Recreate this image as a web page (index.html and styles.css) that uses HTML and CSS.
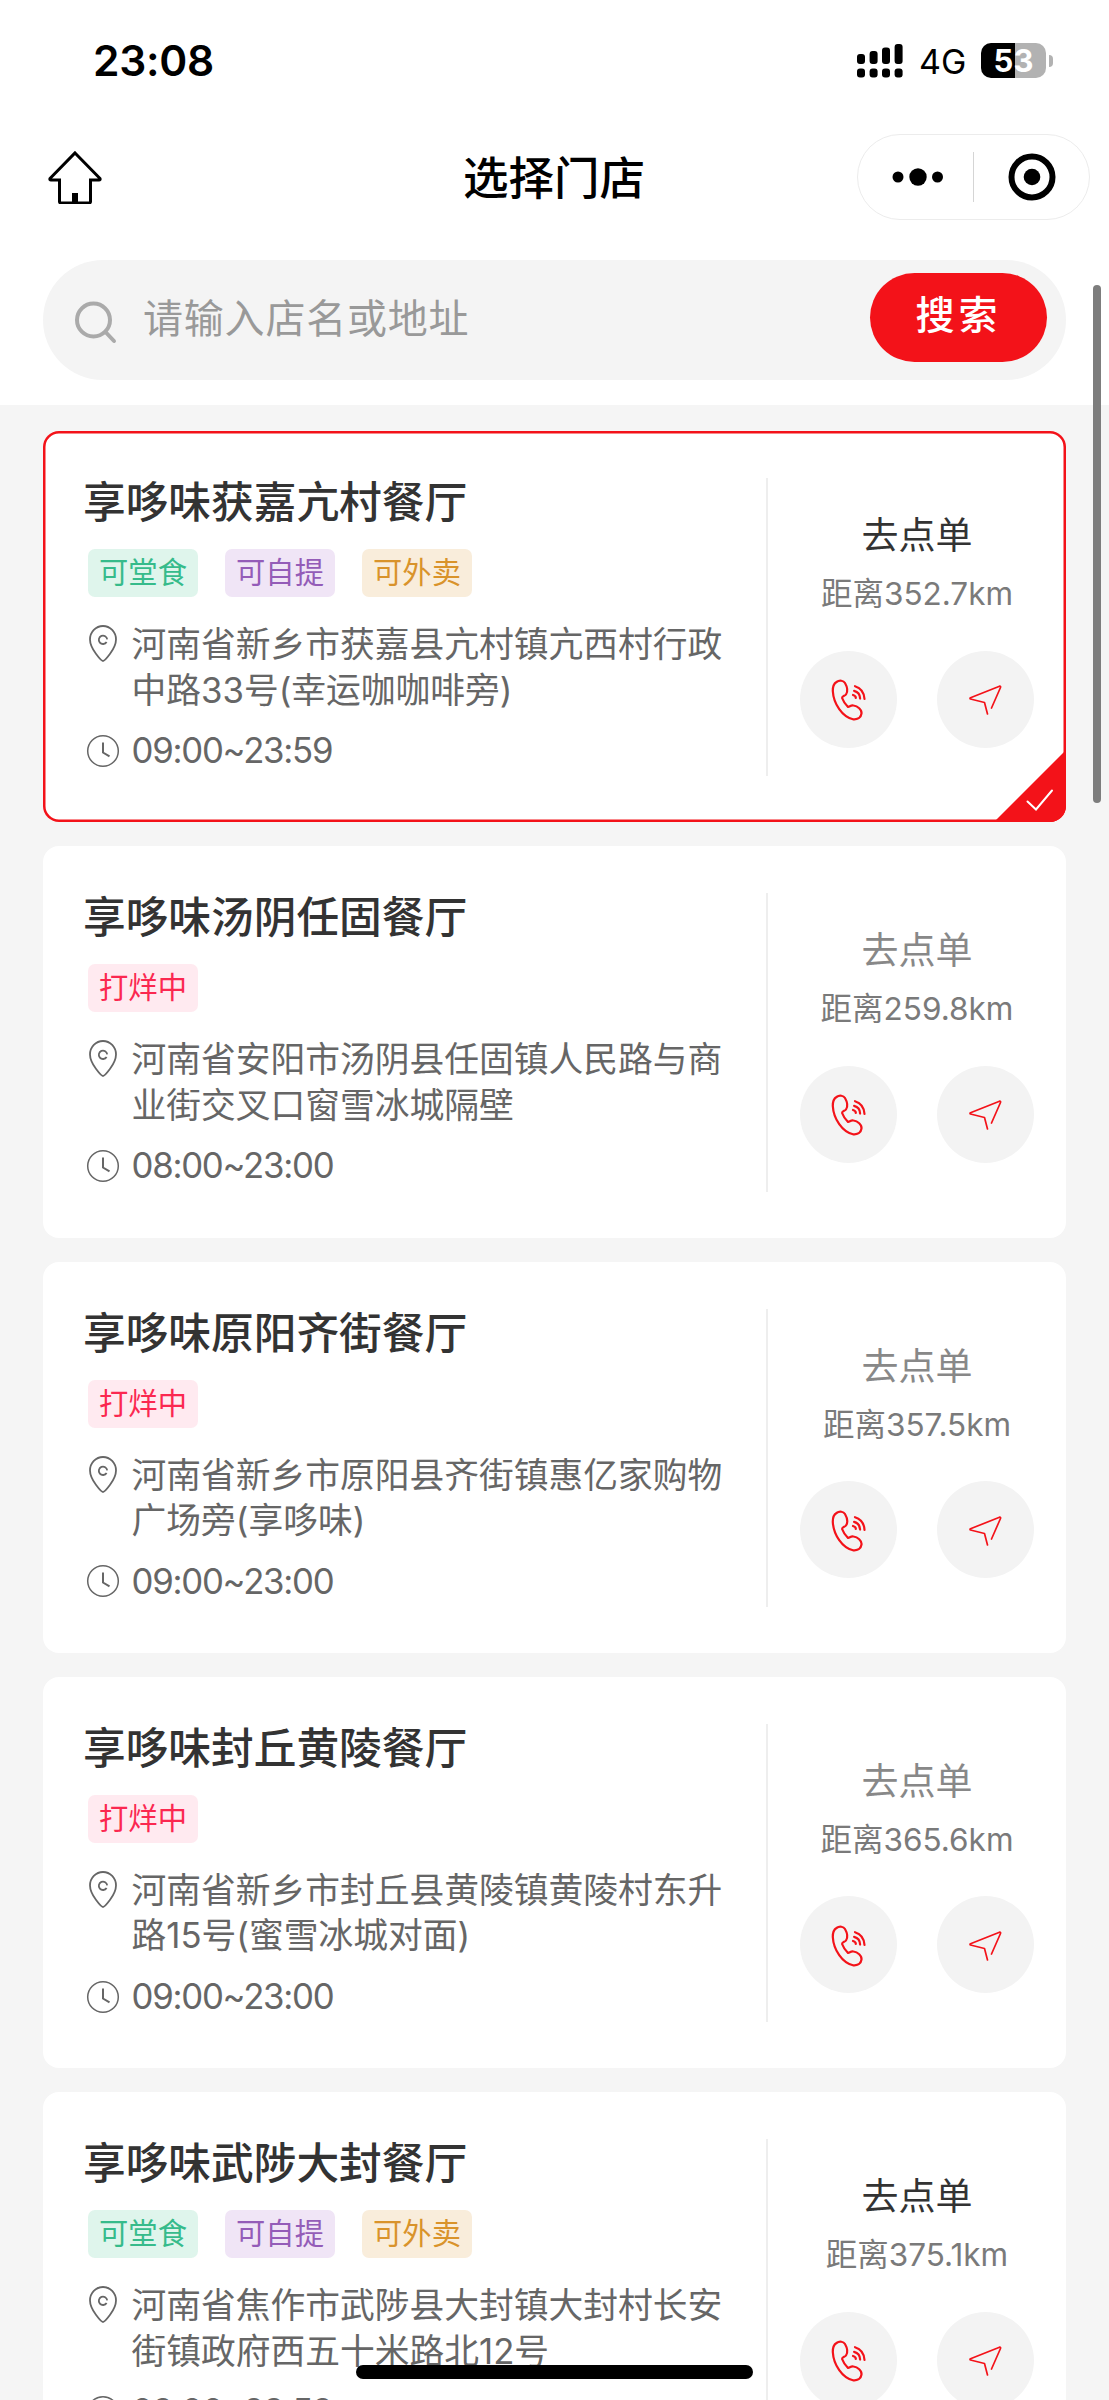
FILE: index.html
```html
<!DOCTYPE html>
<html lang="zh-CN">
<head>
<meta charset="utf-8">
<title>选择门店</title>
<link rel="stylesheet" href="styles.css">
</head>
<body>
<svg class="defs" width="0" height="0" aria-hidden="true">
  <symbol id="pin" viewBox="0 0 32 40"><path d="M16 37C14.500 37 3 25 3 15.500a13 13.500 0 0 1 26 0C29 25 17.500 37 16 37Z"/><path d="M19.600 18A4.200 4.200 0 1 1 20.200 15.400"/></symbol>
  <symbol id="clock" viewBox="0 0 34 34"><circle cx="17" cy="17" r="15.300"/><path d="M17 8.500V18.500L23.500 22.300" stroke-width="2"/></symbol>
  <symbol id="phone" viewBox="-1.500 -1 60 60"><path d="M16 12C19 9.800 23 10.500 24.500 13C26.500 16.500 27.500 21.500 25.500 24.500C24.500 26 21.500 26 21.600 28C23 32 25.500 35 27.500 37C29.500 36.500 30.500 35 33 35.500C37 36 41.500 39.500 41 43.500C40.500 47.500 37 49.800 32.500 49.300C22 47 13 34 12.300 21C12.200 17 13.500 13.500 16 12Z"/><path d="M34.500 16.200Q43.500 19 44 29M33.600 20.900Q39.500 22.500 39.600 28.600M32.500 25Q35.500 26 35.300 28"/></symbol>
  <symbol id="nav" viewBox="0 -1 60 60"><path d="M31.500 44L28.500 32.500L14.500 29Q13.500 28.400 14.500 27.800L43.500 16.200Q45 16 44.500 17.500L35.500 38"/></symbol>
</svg>
<div class="screen">
  <header class="top">
    <div class="status">
      <span class="time">23:08</span>
      <div class="indicators">
        <svg class="signal" viewBox="0 0 46 34"><rect x="0" y="10" width="8" height="10" rx="3"/><rect x="12.600" y="7" width="8" height="13" rx="3"/><rect x="25" y="3.500" width="8" height="16.500" rx="3"/><rect x="37.600" y="0" width="8" height="20" rx="3"/><rect x="0" y="24.500" width="8" height="9" rx="3"/><rect x="12.600" y="24.500" width="8" height="9" rx="3"/><rect x="25" y="24.500" width="8" height="9" rx="3"/><rect x="37.600" y="24.500" width="8" height="9" rx="3"/></svg>
        <span class="net">4G</span>
        <div class="battery"><span class="cell">53</span><span class="nib"></span></div>
      </div>
    </div>
    <div class="nav">
      <svg class="home" viewBox="0 0 54 54"><path d="M27 3L52 28.500Q52.500 30 51 30H42.500V51.500Q42.500 53 41 53H13Q11.500 53 11.500 51.500V30H3Q1.500 30 2 28.500Z"/><rect x="24" y="43" width="6" height="10"/></svg>
      <h1 class="title">选择门店</h1>
      <div class="capsule">
        <svg class="dots" viewBox="0 0 52 20"><circle cx="6" cy="10" r="5.500"/><circle cx="26" cy="10" r="8.700"/><circle cx="45.500" cy="10" r="5.500"/></svg>
        <span class="split"></span>
        <svg class="target" viewBox="0 0 48 48"><circle cx="24" cy="24" r="20.500"/><circle class="core" cx="24" cy="24" r="8.300"/></svg>
      </div>
    </div>
    <div class="search">
      <svg class="glass" viewBox="0 0 44 44"><circle cx="19.500" cy="20" r="16.500"/><path d="M31.500 32L40 41"/></svg>
      <span class="hint">请输入店名或地址</span>
      <button class="go">搜索</button>
    </div>
  </header>
  <main class="list">
    <article class="card selected">
      <div class="info">
        <h2 class="name">享哆味获嘉亢村餐厅</h2>
        <div class="tags"><span class="tag dine">可堂食</span><span class="tag pick">可自提</span><span class="tag out">可外卖</span></div>
        <div class="addr"><svg class="pin"><use href="#pin"/></svg><p>河南省新乡市获嘉县亢村镇亢西村行政<br>中路33号(幸运咖咖啡旁)</p></div>
        <div class="hours"><svg class="clock"><use href="#clock"/></svg><span>09:00~23:59</span></div>
      </div>
      <div class="side">
        <div class="order">去点单</div><div class="dist">距离352.7km</div>
        <div class="acts"><span class="act"><svg><use href="#phone"/></svg></span><span class="act"><svg class="thin"><use href="#nav"/></svg></span></div>
      </div>
      <svg class="corner" viewBox="0 0 72 72"><path class="fold" d="M72 0V72H0Z"/><path class="tick" d="M33.500 51.500L42 59.500L58 40.500"/></svg>
    </article>
    <article class="card closed">
      <div class="info">
        <h2 class="name">享哆味汤阴任固餐厅</h2>
        <div class="tags"><span class="tag shut">打烊中</span></div>
        <div class="addr"><svg class="pin"><use href="#pin"/></svg><p>河南省安阳市汤阴县任固镇人民路与商<br>业街交叉口窗雪冰城隔壁</p></div>
        <div class="hours"><svg class="clock"><use href="#clock"/></svg><span>08:00~23:00</span></div>
      </div>
      <div class="side">
        <div class="order">去点单</div><div class="dist">距离259.8km</div>
        <div class="acts"><span class="act"><svg><use href="#phone"/></svg></span><span class="act"><svg class="thin"><use href="#nav"/></svg></span></div>
      </div>
    </article>
    <article class="card closed">
      <div class="info">
        <h2 class="name">享哆味原阳齐街餐厅</h2>
        <div class="tags"><span class="tag shut">打烊中</span></div>
        <div class="addr"><svg class="pin"><use href="#pin"/></svg><p>河南省新乡市原阳县齐街镇惠亿家购物<br>广场旁(享哆味)</p></div>
        <div class="hours"><svg class="clock"><use href="#clock"/></svg><span>09:00~23:00</span></div>
      </div>
      <div class="side">
        <div class="order">去点单</div><div class="dist">距离357.5km</div>
        <div class="acts"><span class="act"><svg><use href="#phone"/></svg></span><span class="act"><svg class="thin"><use href="#nav"/></svg></span></div>
      </div>
    </article>
    <article class="card closed">
      <div class="info">
        <h2 class="name">享哆味封丘黄陵餐厅</h2>
        <div class="tags"><span class="tag shut">打烊中</span></div>
        <div class="addr"><svg class="pin"><use href="#pin"/></svg><p>河南省新乡市封丘县黄陵镇黄陵村东升<br>路15号(蜜雪冰城对面)</p></div>
        <div class="hours"><svg class="clock"><use href="#clock"/></svg><span>09:00~23:00</span></div>
      </div>
      <div class="side">
        <div class="order">去点单</div><div class="dist">距离365.6km</div>
        <div class="acts"><span class="act"><svg><use href="#phone"/></svg></span><span class="act"><svg class="thin"><use href="#nav"/></svg></span></div>
      </div>
    </article>
    <article class="card">
      <div class="info">
        <h2 class="name">享哆味武陟大封餐厅</h2>
        <div class="tags"><span class="tag dine">可堂食</span><span class="tag pick">可自提</span><span class="tag out">可外卖</span></div>
        <div class="addr"><svg class="pin"><use href="#pin"/></svg><p>河南省焦作市武陟县大封镇大封村长安<br>街镇政府西五十米路北12号</p></div>
        <div class="hours"><svg class="clock"><use href="#clock"/></svg><span>09:00~23:59</span></div>
      </div>
      <div class="side">
        <div class="order">去点单</div><div class="dist">距离375.1km</div>
        <div class="acts"><span class="act"><svg><use href="#phone"/></svg></span><span class="act"><svg class="thin"><use href="#nav"/></svg></span></div>
      </div>
    </article>
  </main>
  <div class="scrollbar"></div>
  <div class="home-bar"></div>
</div>
</body>
</html>
```

FILE: styles.css
```css
* { box-sizing: border-box; }
body { margin: 0; background: #f5f5f5; font-family: Inter, "Noto Sans CJK SC", sans-serif; }
h1, h2, p { margin: 0; }
svg { display: block; flex: none; fill: none; }
.defs { position: absolute; }
.screen { position: relative; width: 1109px; height: 2400px; overflow: hidden; background: #f5f5f5; }

.top { height: 405px; background: #fff; }
.status { display: flex; justify-content: space-between; align-items: center; height: 121px; padding: 0 56px 0 93px; }
.time { font-size: 42.500px; font-weight: 600; line-height: 60px; letter-spacing: -0.300px; }
.indicators { display: flex; align-items: center; }
.signal { width: 46px; height: 34px; fill: #000; margin-right: 16px; }
.net { width: 62px; font-size: 34px; line-height: 40px; margin-top: 2px; }
.battery { display: flex; align-items: center; gap: 3px; }
.cell { width: 65px; height: 35px; border-radius: 10px; background: linear-gradient(90deg, #000 34px, #b2b2b2 34px); color: #fff; font-size: 31px; font-weight: 700; line-height: 35px; text-align: center; }
.nib { width: 4px; height: 12px; border-radius: 0 4px 4px 0; background: #b2b2b2; }

.nav { display: grid; grid-template-columns: 1fr auto 1fr; align-items: center; height: 112px; padding: 0 19px 0 48px; }
.home { width: 54px; height: 54px; stroke: #000; stroke-width: 3; }
.home rect { fill: #000; stroke: none; }
.title { font-size: 45.500px; font-weight: 500; line-height: 60px; margin: 3px 0 0 -30px; }
.capsule { display: flex; align-items: center; justify-self: end; width: 233px; height: 86px; border: 1px solid #ececec; border-radius: 43px; padding-left: 34px; }
.dots { width: 52px; height: 20px; fill: #000; }
.split { width: 1px; height: 50px; margin: 0 34px 0 29px; background: #d5d5d5; }
.target { width: 48px; height: 48px; stroke: #000; stroke-width: 6; }
.target .core { fill: #000; stroke: none; }

.search { display: flex; align-items: center; width: 1023px; height: 120px; margin: 27px 0 0 43px; padding: 0 19px 0 31px; border-radius: 60px; background: #f4f4f4; }
.glass { width: 44px; height: 44px; stroke: #aaa; stroke-width: 4; stroke-linecap: round; margin: 3px 25px 0 0; }
.hint { flex: 1; color: #999; font-size: 40px; letter-spacing: 0.800px; line-height: 56px; margin-top: -2px; }
.go { width: 177px; height: 89px; margin-top: -6px; border: 0; border-radius: 45px; background: #f31219; color: #fff; font: 500 39px/84px Inter, "Noto Sans CJK SC", sans-serif; letter-spacing: 4px; padding: 0 0 5px; }

.list { display: flex; flex-direction: column; gap: 24px; padding: 26px 43px 0; }
.card { position: relative; flex: none; display: flex; height: 391.250px; padding: 47px 0 46px 41px; border-radius: 16px; background: #fff; }
.card.selected { box-shadow: inset 0 0 0 2.500px #f31219; overflow: hidden; }
.info { width: 684px; border-right: 2px solid #eee; }
.name { color: #333; font-size: 42.700px; font-weight: 500; line-height: 48px; white-space: nowrap; padding-top: 1px; margin-left: -1px; }
.tags { display: flex; gap: 27px; margin: 22px 0 0 4px; }
.tag { width: 110px; height: 48px; border-radius: 7px; font-size: 29.300px; line-height: 48px; text-align: center; white-space: nowrap; }
.dine { background: #dff5ec; color: #36bb8b; }
.pick { background: #f0e5f6; color: #945cb8; }
.out { background: #f9eddb; color: #d9932b; }
.shut { background: #ffeaf0; color: #fb2850; }
.addr, .hours { display: flex; color: #666; font-size: 34.750px; line-height: 45.500px; white-space: nowrap; }
.addr { margin-top: 25px; }
.pin { width: 32px; height: 40px; margin: 2px 12.500px 0 3px; stroke: #666; stroke-width: 1.800; }
.hours { align-items: center; margin-top: 15px; letter-spacing: -1.250px; }
.clock { width: 34px; height: 34px; margin: 0 11.500px 0 2px; stroke: #666; stroke-width: 1.500; }
.side { display: flex; flex-direction: column; align-items: center; width: 298px; padding-top: 35px; }
.order { color: #333; font-size: 37px; line-height: 46px; }
.closed .order { color: #888; }
.dist { margin-top: 15px; color: #7a7a7a; font-size: 31.500px; line-height: 40px; white-space: nowrap; }
.acts { display: flex; gap: 40px; margin-top: 36.500px; }
.act { display: flex; align-items: center; justify-content: center; width: 97px; height: 97px; border-radius: 50%; background: #f3f3f3; }
.act svg { width: 60px; height: 60px; stroke: #f31219; stroke-width: 2.200; stroke-linecap: round; stroke-linejoin: round; }
.act .thin { stroke-width: 1.700; }
.corner { position: absolute; right: 0; bottom: 0; width: 72px; height: 72px; }
.fold { fill: #f31219; }
.tick { stroke: #fff; stroke-width: 2; stroke-linecap: round; }

.scrollbar { position: absolute; left: 1093px; top: 285px; width: 8px; height: 518px; border-radius: 4px; background: #7d7d7d; }
.home-bar { position: absolute; left: 356px; top: 2365px; width: 397px; height: 14px; border-radius: 7px; background: #000; }
```
